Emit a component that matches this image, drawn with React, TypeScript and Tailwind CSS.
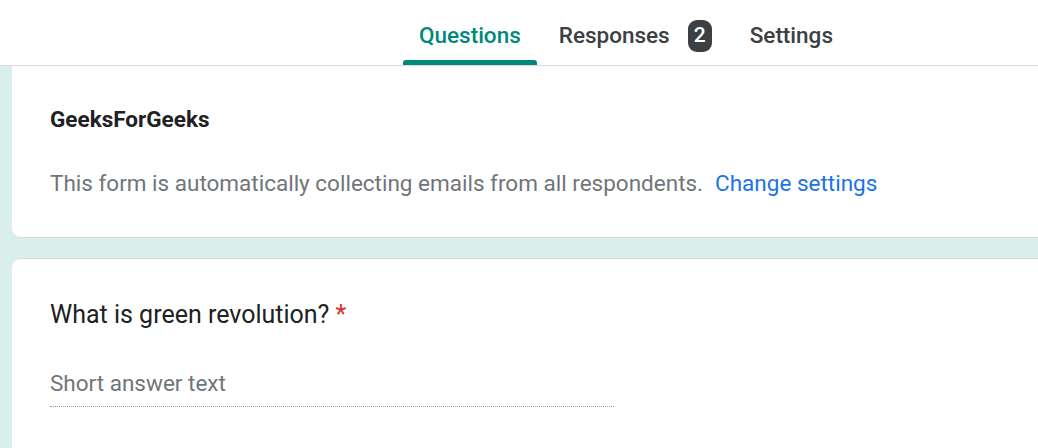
import React from "react";

export default function App() {
  return (
    <div className="w-[1038px] h-[448px] overflow-hidden bg-[#d9efec] font-['Roboto',sans-serif]">
      <header className="h-[66px] bg-white border-b border-[#dadce0] flex items-end pl-[403px]">
        <div className="flex items-end h-full">
          <div className="relative h-full flex items-center pt-[7px] px-[16px] text-[22.5px] font-medium text-[#00897b]">
            Questions
            <div className="absolute left-0 right-0 bottom-0 h-[5px] bg-[#00897b] rounded-t-[3px]" />
          </div>
          <div className="h-full flex items-center pt-[7px] pl-[22px] text-[22.5px] font-medium text-[#3c4043]">
            Responses
            <span className="ml-[18px] w-[24px] h-[32px] rounded-[9px] bg-[#3c4043] text-white text-[21px] font-medium flex items-center justify-center">2</span>
          </div>
          <div className="h-full flex items-center pt-[7px] pl-[38px] text-[22.5px] font-medium text-[#3c4043]">
            Settings
          </div>
        </div>
      </header>
      <div className="pl-[12px]">
        <div className="bg-white rounded-bl-[9px] border-b border-[#dadce0] h-[172px] pl-[38px] pt-[37px]">
          <div className="text-[22.5px] font-bold text-[#202124] leading-[32px]">GeeksForGeeks</div>
          <div className="mt-[33px] text-[22.5px] text-[#70757a] leading-[30px]">
            This form is automatically collecting emails from all respondents.
            <span className="ml-[12px] text-[#1a73e8]">Change settings</span>
          </div>
        </div>
        <div className="mt-[20px] bg-white rounded-tl-[9px] border-t border-[#dadce0] h-[200px] pl-[38px] pt-[39px]">
          <div className="text-[25px] text-[#202124] leading-[34px]">
            What is green revolution?<span className="ml-[6px] text-[#d93025]">*</span>
          </div>
          <div className="mt-[37px] w-[564px] border-b border-dotted border-[#9aa0a6] pb-[9px] text-[22.5px] text-[#70757a] leading-[28px]">
            Short answer text
          </div>
        </div>
      </div>
    </div>
  );
}
